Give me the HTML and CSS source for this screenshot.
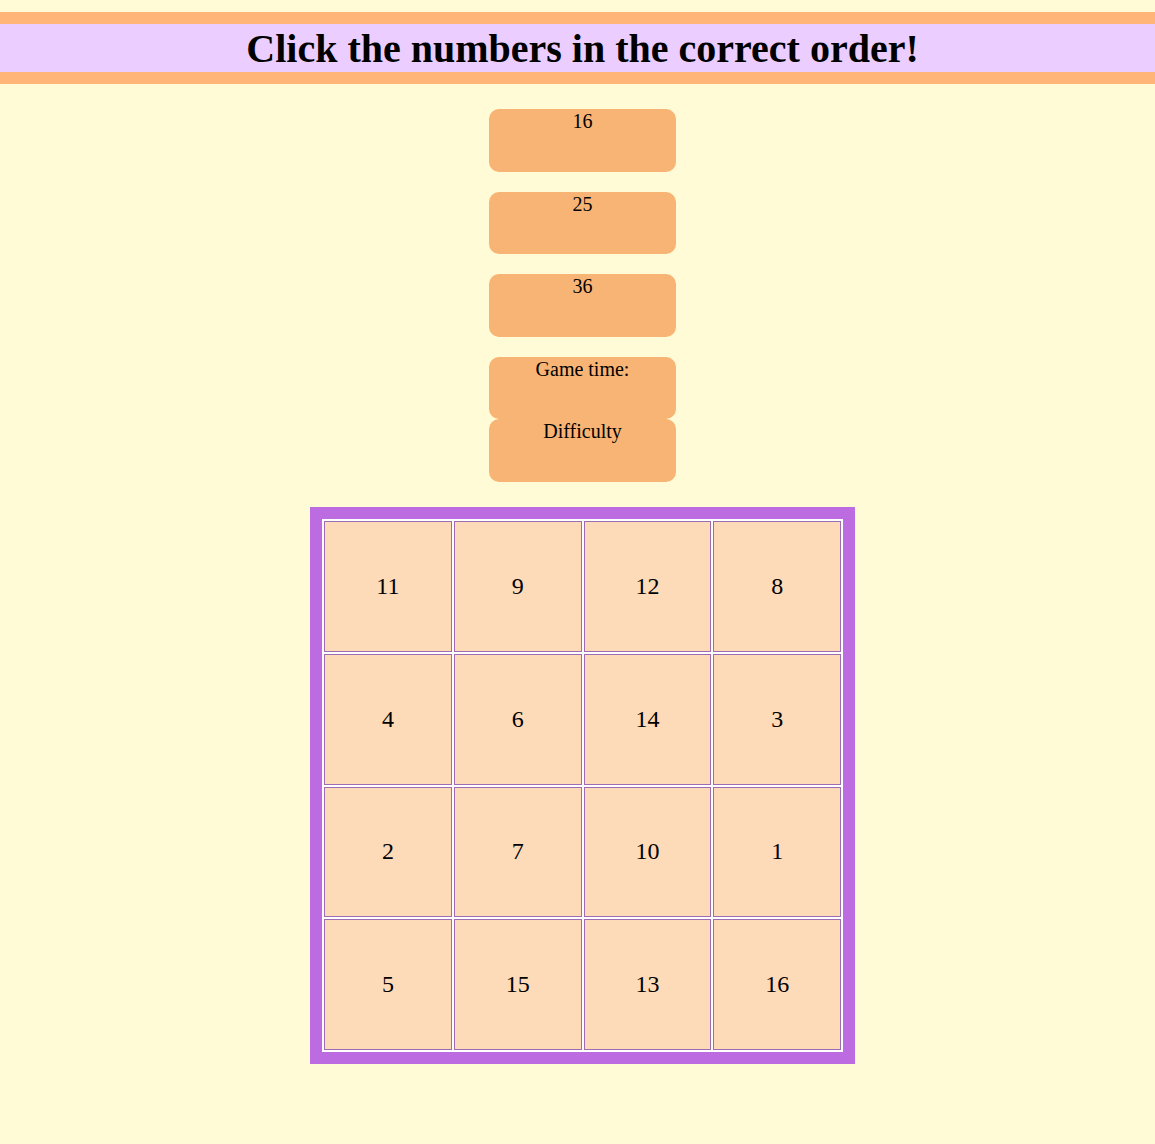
FILE: index.html
```html
<!DOCTYPE html>
<html lang="en">
<head>
<meta charset="utf-8">
<title>Number order game</title>
<link rel="stylesheet" href="styles.css">
</head>
<body>
<h1 class="title">Click the numbers in the correct order!</h1>
<main class="main">
  <div class="options">
    <div class="box spaced">16</div>
    <div class="box spaced">25</div>
    <div class="box spaced">36</div>
    <div class="box">Game time:</div>
    <div class="box">Difficulty</div>
  </div>
  <div class="board">
    <div class="cell">11</div><div class="cell">9</div><div class="cell">12</div><div class="cell">8</div>
    <div class="cell">4</div><div class="cell">6</div><div class="cell">14</div><div class="cell">3</div>
    <div class="cell">2</div><div class="cell">7</div><div class="cell">10</div><div class="cell">1</div>
    <div class="cell">5</div><div class="cell">15</div><div class="cell">13</div><div class="cell">16</div>
  </div>
</main>
</body>
</html>
```
FILE: styles.css
```css
html, body {
  margin: 0;
  padding: 0;
  background: #FFFBD6;
  font-family: "Liberation Serif", "Times New Roman", serif;
  color: #000;
}
.title {
  margin: 12px 0 0 0;
  padding: 2px 0 0 10px;
  background: #EBCDFF;
  border-top: 12px solid #FFB577;
  border-bottom: 12px solid #FFB577;
  font-size: 40px;
  font-weight: bold;
  line-height: 46px;
  text-align: center;
}
.main {
  display: flex;
  flex-direction: column;
  align-items: center;
  padding: 25px 0 0 10px;
}
.options {
  display: flex;
  flex-direction: column;
  align-items: center;
}
.box {
  width: 187px;
  height: 62.5px;
  box-sizing: border-box;
  background: #F8B474;
  border-radius: 10px;
  font-size: 20px;
  line-height: 24px;
  text-align: center;
}
.spaced {
  margin-bottom: 20px;
}
.board {
  margin-top: 25.5px;
  display: grid;
  grid-template-columns: repeat(4, 127.75px);
  grid-auto-rows: 130.75px;
  gap: 2px;
  padding: 2px;
  background: #FFFFFF;
  border: 12px solid #BC6CE0;
}
.cell {
  box-sizing: border-box;
  border: 1px solid #9E6CB2;
  background: #FDDAB8;
  display: flex;
  align-items: center;
  justify-content: center;
  font-size: 24px;
}
```
